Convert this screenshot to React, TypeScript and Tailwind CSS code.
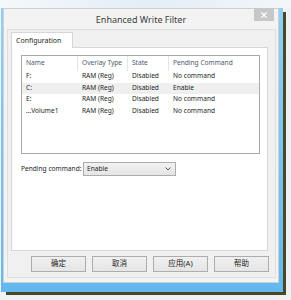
export default function App() {
  const rows: { name: string; type: string; state: string; cmd: string; sel: boolean }[] = [
    { name: "F:", type: "RAM (Reg)", state: "Disabled", cmd: "No command", sel: false },
    { name: "C:", type: "RAM (Reg)", state: "Disabled", cmd: "Enable", sel: true },
    { name: "E:", type: "RAM (Reg)", state: "Disabled", cmd: "No command", sel: false },
    { name: "…Volume1", type: "RAM (Reg)", state: "Disabled", cmd: "No command", sel: false },
  ];
  return (
    <div className="relative w-[291px] h-[300px] overflow-hidden bg-[#eef2f4] font-['Noto_Sans','Noto_Sans_CJK_SC',sans-serif] text-[#1e1e1e]">
      {/* desktop strip at top */}
      <div className="absolute left-0 top-0 w-[291px] h-[8px] bg-gradient-to-r from-[#f4f8fb] via-[#e3eef7] to-[#f2f6f9]" />
      {/* drop shadow */}
      <div className="absolute left-[6px] top-[12px] w-[280px] h-[283px] bg-[#4b4829] blur-[0.5px]" />
      {/* desktop blue behind window */}
      <div className="absolute left-[1px] top-[8px] w-[282px] h-[284px] bg-gradient-to-b from-[#8fd0f5] to-[#62b9ef]" />
      {/* window */}
      <div className="absolute left-[3px] top-[8px] w-[276px] h-[275px] bg-[#f3f3f3] border border-[#cfcfcf] flex flex-col">
        <div className="relative h-[20px] flex items-center justify-center">
          <span className="text-[9px] text-[#3d3d3d] leading-none mt-[1px]">Enhanced Write Filter</span>
          <div className="absolute right-[4px] top-[-1px] w-[20px] h-[13px] bg-[#c7c7c7] flex items-center justify-center">
            <svg width="6" height="6" viewBox="0 0 6 6">
              <path d="M0.5 0.5 L5.5 5.5 M5.5 0.5 L0.5 5.5" stroke="#ffffff" strokeWidth="1.3" />
            </svg>
          </div>
        </div>
        <div className="ml-[3px] w-[269px] h-[249px] bg-[#f0f0f0] border border-[#dedede] flex flex-col">
          <div className="pl-[3px] pt-[2px]">
            <div className="relative z-10 -mb-px w-[62px] h-[16px] bg-white border border-b-0 border-[#d6d6d6] flex items-center pl-[4px]">
              <span className="text-[7px] leading-none text-[#1e1e1e]">Configuration</span>
            </div>
            <div className="w-[257px] h-[204px] bg-white border border-[#d6d6d6] pl-[9px] pt-[7px] flex flex-col">
              <div className="w-[239px] h-[99px] border border-[#a9a9a9] bg-white flex flex-col">
                <div className="h-[15px] flex text-[6.6px] text-[#4b5a6b] leading-none">
                  <div className="w-[56px] border-r border-[#e5e5e5] flex items-center pl-[4px]">Name</div>
                  <div className="w-[50px] border-r border-[#e5e5e5] flex items-center pl-[4px]">Overlay Type</div>
                  <div className="w-[41px] border-r border-[#e5e5e5] flex items-center pl-[4px]">State</div>
                  <div className="flex-1 flex items-center pl-[4px]">Pending Command</div>
                </div>
                {rows.map((r) => (
                  <div
                    key={r.name}
                    className={`h-[11.5px] flex text-[6.6px] leading-none ${r.sel ? "bg-[#efefef]" : ""}`}
                  >
                    <div className="w-[56px] flex items-center pl-[4px]">{r.name}</div>
                    <div className="w-[50px] flex items-center pl-[4px]">{r.type}</div>
                    <div className="w-[41px] flex items-center pl-[4px]">{r.state}</div>
                    <div className="flex-1 flex items-center pl-[4px]">{r.cmd}</div>
                  </div>
                ))}
              </div>
              <div className="mt-[8px] flex items-center">
                <span className="w-[62px] whitespace-nowrap text-[6.6px] leading-none">Pending command:</span>
                <div className="w-[93px] h-[14px] border border-[#acacac] bg-gradient-to-b from-[#f2f2f2] to-[#e5e5e5] flex items-center justify-between pl-[3px] pr-[4px]">
                  <span className="text-[6.6px] leading-none">Enable</span>
                  <svg width="6" height="4" viewBox="0 0 6 4">
                    <path d="M0.5 0.5 L3 3 L5.5 0.5" stroke="#555555" strokeWidth="1" fill="none" />
                  </svg>
                </div>
              </div>
            </div>
          </div>
          <div className="mt-[5px] ml-[23px] flex gap-[6px]">
            {["确定", "取消", "应用(A)", "帮助"].map((b) => (
              <div
                key={b}
                className="w-[55px] h-[16px] border border-[#adadad] bg-gradient-to-b from-[#f0f0f0] to-[#e5e5e5] flex items-center justify-center text-[7.5px] leading-none text-[#1e1e1e]"
              >
                {b}
              </div>
            ))}
          </div>
        </div>
      </div>
    </div>
  );
}
